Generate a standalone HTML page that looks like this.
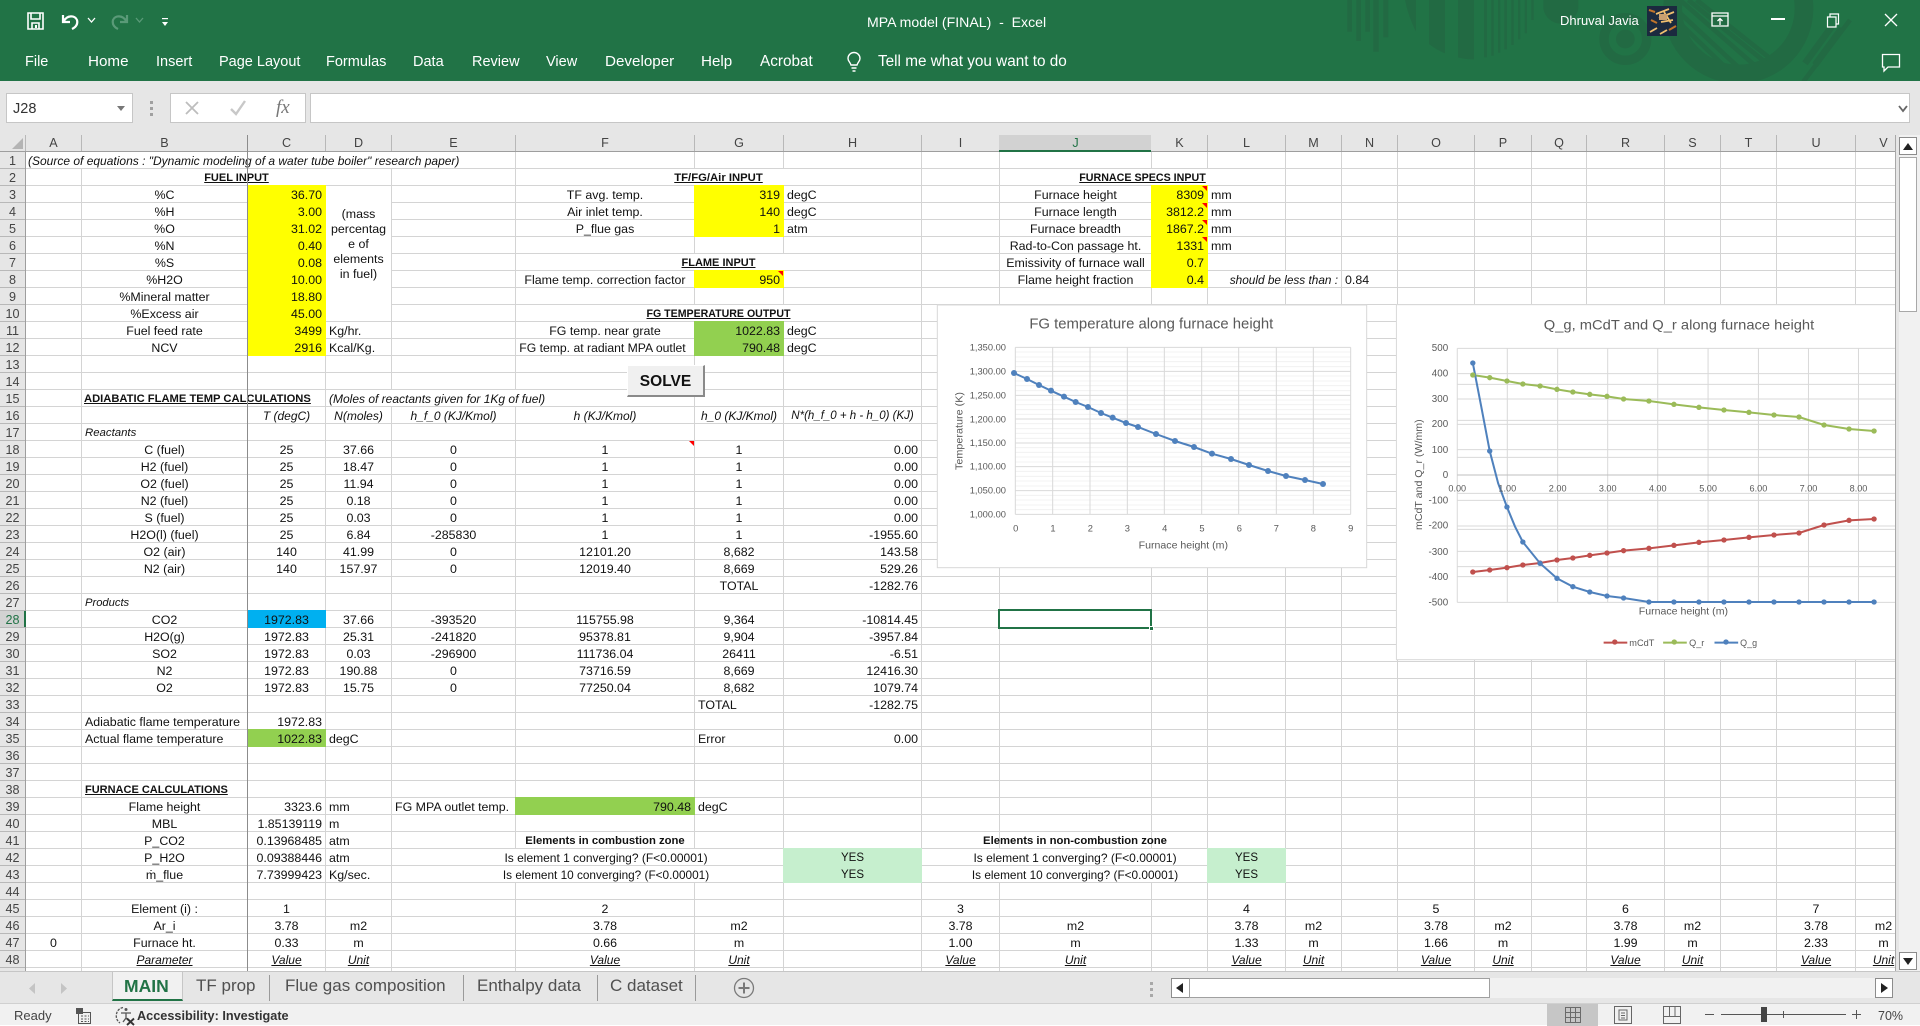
<!DOCTYPE html>
<html><head><meta charset="utf-8"><title>MPA model (FINAL) - Excel</title>
<style>
*{box-sizing:border-box}
html,body{margin:0;padding:0;width:1920px;height:1025px;overflow:hidden;background:#fff;font-family:"Liberation Sans",Arial,sans-serif}
#rb{position:absolute;left:0;top:0;width:1920px;height:81px;background:#217346;overflow:hidden}
#rb span{position:absolute;color:#fff;font-size:14.5px;line-height:18px;white-space:nowrap}
#fb{position:absolute;left:0;top:81px;width:1920px;height:54px;background:#e6e6e6}
.box{position:absolute;background:#fff;border:1px solid #c6c6c6;top:12px;height:30px}
#wrap{position:absolute;left:0;top:135px;width:1895px;height:836px;overflow:hidden}
#sheet{position:absolute;left:0;top:-135px;width:1895px;height:971px}
#grid{position:absolute;left:26px;top:152px;width:1870px;height:819px;background:repeating-linear-gradient(to bottom,transparent 0,transparent 16px,#d4d4d4 16px,#d4d4d4 17px)}
.v{position:absolute;top:152px;height:819px;width:1px;background:#d4d4d4}
#rh{position:absolute;left:0;top:152px;width:26px;height:819px;background:repeating-linear-gradient(to bottom,#e6e6e6 0,#e6e6e6 16px,#b8b8b8 16px,#b8b8b8 17px);border-right:1px solid #9e9e9e}
#ch{position:absolute;left:0;top:135px;width:1896px;height:17px;background:#e6e6e6;border-bottom:1px solid #9e9e9e}
.hs{position:absolute;top:135px;height:16px;width:1px;background:#b8b8b8}
.f{position:absolute}
.w{background:#fff;height:16px}
p{margin:1px 0 0;position:absolute;font-size:12.4px;line-height:16px;height:16px;padding:0 3px;white-space:nowrap;color:#111}
.h{top:135px;margin-top:0;text-align:center;color:#444;font-size:12.6px}
.n{left:0;width:25px;padding:0;text-align:center;color:#444;font-size:12.6px}
.A{left:26px;width:55px}.B{left:82px;width:165px}.C{left:248px;width:77px}.D{left:326px;width:65px}.E{left:392px;width:123px}.F{left:516px;width:178px}.G{left:695px;width:88px}.H{left:784px;width:137px}.I{left:922px;width:77px}.J{left:1000px;width:151px}.K{left:1152px;width:55px}.L{left:1208px;width:77px}.M{left:1286px;width:55px}.N{left:1342px;width:55px}.O{left:1398px;width:76px}.P{left:1475px;width:56px}.Q{left:1532px;width:54px}.R{left:1587px;width:77px}.S{left:1665px;width:55px}.T{left:1721px;width:55px}.U{left:1777px;width:78px}.V{left:1856px;width:55px}
.m{text-align:center}.e{text-align:right}
.it{font-style:italic;font-size:12px}.ul{text-decoration:underline}
.bh{font-weight:bold;text-decoration:underline;font-size:11px}
.r1{top:152px}.r2{top:169px}.r3{top:186px}.r4{top:203px}.r5{top:220px}.r6{top:237px}.r7{top:254px}.r8{top:271px}.r9{top:288px}.r10{top:305px}.r11{top:322px}.r12{top:339px}.r13{top:356px}.r14{top:373px}.r15{top:390px}.r16{top:407px}.r17{top:424px}.r18{top:441px}.r19{top:458px}.r20{top:475px}.r21{top:492px}.r22{top:509px}.r23{top:526px}.r24{top:543px}.r25{top:560px}.r26{top:577px}.r27{top:594px}.r28{top:611px}.r29{top:628px}.r30{top:645px}.r31{top:662px}.r32{top:679px}.r33{top:696px}.r34{top:713px}.r35{top:730px}.r36{top:747px}.r37{top:764px}.r38{top:781px}.r39{top:798px}.r40{top:815px}.r41{top:832px}.r42{top:849px}.r43{top:866px}.r44{top:883px}.r45{top:900px}.r46{top:917px}.r47{top:934px}.r48{top:951px}.r49{top:968px}
.tri{position:absolute;width:0;height:0;border-top:5px solid #f00;border-left:5px solid transparent}
#tabs{position:absolute;left:0;top:971px;width:1920px;height:32px;background:#e6e6e6;border-top:1px solid #c6c6c6}
#tabs span{position:absolute;top:4px;font-size:17px;line-height:20px;color:#505050;white-space:nowrap}
.sp{position:absolute;top:3px;height:26px;width:1px;background:#9a9a9a}
#st{position:absolute;left:0;top:1003px;width:1920px;height:22px;background:#f1f1f1;border-top:1px solid #d0d0d0}
#st span{position:absolute;top:3px;font-size:13px;line-height:18px;color:#444;white-space:nowrap}
svg{position:absolute;overflow:hidden}
svg text{font-family:"Liberation Sans",Arial,sans-serif;fill:#595959}
</style></head><body>

<div id="rb">
<svg style="left:1330px;top:0" width="590" height="81" viewBox="0 0 1770 243" fill="#226a43">
<rect x="52" y="0" width="14" height="95"/><rect x="79" y="0" width="14" height="123"/><rect x="106" y="0" width="14" height="95"/><rect x="130" y="0" width="16" height="155"/><rect x="160" y="0" width="15" height="112"/>
<path d="M225 0H258V95Q235 50 225 0Z"/><path d="M297 0H345V160Q320 150 297 132Z"/><path d="M384 0H432V178Q405 178 384 172Z"/>
<rect x="462" y="0" width="9" height="172"/><rect x="484" y="0" width="7" height="167"/><rect x="504" y="0" width="7" height="158"/><rect x="523" y="0" width="8" height="148"/><rect x="544" y="0" width="7" height="135"/><rect x="564" y="0" width="7" height="118"/><rect x="584" y="0" width="7" height="100"/><rect x="604" y="0" width="7" height="60"/>
<path d="M640 0H745V25A53 53 0 0 1 640 25Z"/>
<circle cx="886" cy="117" r="64" fill="none" stroke="#226a43" stroke-width="28"/><circle cx="886" cy="117" r="28"/>
<circle cx="1225" cy="25" r="197" fill="none" stroke="#226a43" stroke-width="56"/>
<g stroke="#226a43" stroke-width="14" fill="none"><path d="M1050 0L1290 210M1075 0L1310 190M1040 30L1250 225M1040 60L1210 225M1100 0L1320 175M1060 110L1180 225"/>
<path d="M1425 190L1505 80M1455 195L1535 85" stroke-width="20"/><path d="M1420 245L1560 60" stroke-width="14"/></g>
</svg>
<svg style="left:26px;top:11px" width="20" height="20" viewBox="0 0 20 20" fill="none" stroke="#fff" stroke-width="1.6"><path d="M2 2H17V18H2Z"/><path d="M5 2V8H14V2M6 18V12H13V18"/><rect x="9" y="14" width="2" height="3" fill="#fff" stroke="none"/></svg>
<svg style="left:60px;top:11px" width="22" height="20" viewBox="0 0 22 20" fill="none" stroke="#fff" stroke-width="2.2"><path d="M3 4V11H10M4 10C7 4 15 4 17 9C18 13 16 16 12 18"/></svg>
<svg style="left:87px;top:17px" width="9" height="7" viewBox="0 0 9 7" fill="none" stroke="#fff" stroke-width="1.3"><path d="M1 1L4.500 5L8 1"/></svg>
<svg style="left:108px;top:11px" width="22" height="20" viewBox="0 0 22 20" fill="none" stroke="#5a9a78" stroke-width="2.2"><path d="M19 4V11H12M18 10C15 4 7 4 5 9C4 13 6 16 10 18"/></svg>
<svg style="left:135px;top:17px" width="9" height="7" viewBox="0 0 9 7" fill="none" stroke="#5a9a78" stroke-width="1.3"><path d="M1 1L4.500 5L8 1"/></svg>
<svg style="left:161px;top:17px" width="8" height="10" viewBox="0 0 8 10" fill="#fff"><rect x="1" y="1" width="6" height="1.200"/><path d="M1 5H7L4 9Z"/></svg>
<span style="left:867px;top:13px;font-size:14.1px">MPA model (FINAL)&nbsp; -&nbsp; Excel</span>
<span style="left:25px;top:53px">File</span>
<span style="left:88px;top:53px;font-size:15.2px">Home</span>
<span style="left:156px;top:53px">Insert</span>
<span style="left:219px;top:53px">Page Layout</span>
<span style="left:326px;top:53px">Formulas</span>
<span style="left:413px;top:53px">Data</span>
<span style="left:472px;top:53px">Review</span>
<span style="left:546px;top:53px">View</span>
<span style="left:605px;top:53px;font-size:15.2px">Developer</span>
<span style="left:701px;top:53px;font-size:15.2px">Help</span>
<span style="left:760px;top:53px;font-size:15.3px">Acrobat</span>
<svg style="left:845px;top:51px" width="18" height="22" viewBox="0 0 18 22" fill="none" stroke="#fff" stroke-width="1.400"><path d="M6 14C5 11 3 10 3 7.500A6 6 0 0 1 15 7.500C15 10 13 11 12 14Z"/><path d="M6.500 17H11.500M7.500 20H10.500"/></svg>
<span style="left:878px;top:53px;font-size:15.3px">Tell me what you want to do</span>
<span style="left:1560px;top:12px;font-size:13px">Dhruval Javia</span>
<svg style="left:1647px;top:6px" width="30" height="30" viewBox="0 0 30 30"><rect width="30" height="30" fill="#1b2a3f"/><path d="M9 8L22 3M12 12L27 6M14 16L26 14M17 6L24 17M3 26L10 22M13 28L20 24" stroke="#f0c070" stroke-width="1.800" fill="none"/><path d="M2 4L8 6M4 14L10 17M22 24L29 20" stroke="#c2742a" stroke-width="2" fill="none"/><rect x="12" y="8" width="8" height="6" fill="#c9a070"/></svg>
<svg style="left:1711px;top:12px" width="18" height="15" viewBox="0 0 18 15" fill="none" stroke="#fff" stroke-width="1.300"><path d="M1 1H17V14H1ZM1 4H17M9 13V7M6.500 9L9 6.500L11.500 9"/></svg>
<div style="position:absolute;left:1771px;top:18px;width:14px;height:1.500px;background:#fff"></div>
<svg style="left:1826px;top:13px" width="14" height="15" viewBox="0 0 14 15" fill="none" stroke="#fff" stroke-width="1.200"><path d="M1.500 4H10V14H1.500ZM4 4V1H12.500V11H10"/></svg>
<svg style="left:1884px;top:13px" width="14" height="14" viewBox="0 0 14 14" stroke="#fff" stroke-width="1.300"><path d="M1 1L13 13M13 1L1 13"/></svg>
<svg style="left:1881px;top:53px" width="20" height="20" viewBox="0 0 20 20" fill="none" stroke="#fff" stroke-width="1.300"><path d="M1.500 1.500H18.500V14H7L3 18V14H1.500Z"/></svg>
</div>

<div id="fb">
<div class="box" style="left:6px;width:127px"></div>
<span style="position:absolute;left:13px;top:19px;font-size:14.5px;line-height:18px;color:#333">J28</span>
<svg style="left:116px;top:24px" width="10" height="7" viewBox="0 0 10 7" fill="#777"><path d="M1 1H9L5 6Z"/></svg>
<div style="position:absolute;left:150px;top:20px;width:3px;height:3px;background:#a0a0a0;box-shadow:0 6px #a0a0a0,0 12px #a0a0a0"></div>
<div class="box" style="left:170px;width:136px"></div>
<svg style="left:185px;top:20px" width="14" height="14" viewBox="0 0 14 14" stroke="#bdbdbd" stroke-width="1.800"><path d="M1 1L13 13M13 1L1 13"/></svg>
<svg style="left:229px;top:19px" width="18" height="16" viewBox="0 0 18 16" fill="none" stroke="#c8c8c8" stroke-width="2.400"><path d="M2 9L7 14L16 1"/></svg>
<span style="position:absolute;left:276px;top:16px;font:italic 19px 'Liberation Serif',serif;color:#777">fx</span>
<div class="box" style="left:310px;width:1600px"></div>
<svg style="left:1898px;top:24px" width="10" height="8" viewBox="0 0 10 8" fill="none" stroke="#666" stroke-width="1.800"><path d="M1 1L5 6L9 1"/></svg>
</div>

<div id="wrap"><div id="sheet">
<div id="grid"></div>
<div class="v" style="left:81px"></div><div class="v" style="left:325px"></div><div class="v" style="left:391px"></div><div class="v" style="left:515px"></div><div class="v" style="left:694px"></div><div class="v" style="left:783px"></div><div class="v" style="left:921px"></div><div class="v" style="left:999px"></div><div class="v" style="left:1151px"></div><div class="v" style="left:1207px"></div><div class="v" style="left:1285px"></div><div class="v" style="left:1341px"></div><div class="v" style="left:1397px"></div><div class="v" style="left:1474px"></div><div class="v" style="left:1531px"></div><div class="v" style="left:1586px"></div><div class="v" style="left:1664px"></div><div class="v" style="left:1720px"></div><div class="v" style="left:1776px"></div><div class="v" style="left:1855px"></div>

<!-- covers -->
<div class="f w" style="left:26px;top:152px;width:489px"></div>
<div class="f w" style="left:82px;top:169px;width:309px"></div>
<div class="f w" style="left:516px;top:169px;width:405px"></div>
<div class="f w" style="left:1000px;top:169px;width:285px"></div>
<div class="f w" style="left:516px;top:254px;width:405px"></div>
<div class="f w" style="left:516px;top:305px;width:405px"></div>
<div class="f" style="left:326px;top:186px;width:65px;height:135px;background:#fff"></div>
<div class="f w" style="left:1208px;top:271px;width:133px"></div>
<div class="f w" style="left:82px;top:390px;width:243px"></div>
<div class="f w" style="left:326px;top:390px;width:368px"></div>
<div class="f w" style="left:500px;top:849px;width:210px"></div>
<div class="f w" style="left:500px;top:866px;width:210px"></div>
<div class="f w" style="left:970px;top:849px;width:210px"></div>
<div class="f w" style="left:970px;top:866px;width:210px"></div>
<!-- fills -->
<div class="f" style="left:247px;top:185px;width:79px;height:171px;background:#ff0"></div>
<div class="f" style="left:694px;top:185px;width:90px;height:52px;background:#ff0"></div>
<div class="f" style="left:694px;top:270px;width:90px;height:18px;background:#ff0"></div>
<div class="f" style="left:694px;top:321px;width:90px;height:35px;background:#92d050"></div>
<div class="f" style="left:1151px;top:185px;width:57px;height:103px;background:#ff0"></div>
<div class="f" style="left:247px;top:610px;width:79px;height:18px;background:#00b0f0"></div>
<div class="f" style="left:247px;top:729px;width:79px;height:18px;background:#92d050"></div>
<div class="f" style="left:515px;top:797px;width:180px;height:18px;background:#92d050"></div>
<div class="f" style="left:783px;top:848px;width:139px;height:35px;background:#c6efce"></div>
<div class="f" style="left:1207px;top:848px;width:79px;height:35px;background:#c6efce"></div>

<!-- headers -->
<div id="ch"></div>
<svg style="left:12px;top:138px" width="11" height="11" viewBox="0 0 11 11" fill="#b4b4b4"><path d="M11 0V11H0Z"/></svg>
<div class="f" style="left:999px;top:135px;width:152px;height:17px;background:#d2d2d2;border-bottom:2px solid #217346"></div>
<div class="hs" style="left:25px"></div><div class="hs" style="left:81px"></div><div class="hs" style="left:325px"></div><div class="hs" style="left:391px"></div><div class="hs" style="left:515px"></div><div class="hs" style="left:694px"></div><div class="hs" style="left:783px"></div><div class="hs" style="left:921px"></div><div class="hs" style="left:1207px"></div><div class="hs" style="left:1285px"></div><div class="hs" style="left:1341px"></div><div class="hs" style="left:1397px"></div><div class="hs" style="left:1474px"></div><div class="hs" style="left:1531px"></div><div class="hs" style="left:1586px"></div><div class="hs" style="left:1664px"></div><div class="hs" style="left:1720px"></div><div class="hs" style="left:1776px"></div><div class="hs" style="left:1855px"></div>
<p class="h A">A</p><p class="h B">B</p><p class="h C">C</p><p class="h D">D</p><p class="h E">E</p><p class="h F">F</p><p class="h G">G</p><p class="h H">H</p><p class="h I">I</p><p class="h J" style="color:#217346">J</p><p class="h K">K</p><p class="h L">L</p><p class="h M">M</p><p class="h N">N</p><p class="h O">O</p><p class="h P">P</p><p class="h Q">Q</p><p class="h R">R</p><p class="h S">S</p><p class="h T">T</p><p class="h U">U</p><p class="h V">V</p>

<div id="rh"></div>
<div class="f" style="left:0;top:611px;width:26px;height:16px;background:#d2d2d2;border-right:2px solid #217346"></div>
<p class="n r1">1</p><p class="n r2">2</p><p class="n r3">3</p><p class="n r4">4</p><p class="n r5">5</p><p class="n r6">6</p><p class="n r7">7</p><p class="n r8">8</p><p class="n r9">9</p><p class="n r10">10</p><p class="n r11">11</p><p class="n r12">12</p><p class="n r13">13</p><p class="n r14">14</p><p class="n r15">15</p><p class="n r16">16</p><p class="n r17">17</p><p class="n r18">18</p><p class="n r19">19</p><p class="n r20">20</p><p class="n r21">21</p><p class="n r22">22</p><p class="n r23">23</p><p class="n r24">24</p><p class="n r25">25</p><p class="n r26">26</p><p class="n r27">27</p><p class="n r28" style="color:#217346">28</p><p class="n r29">29</p><p class="n r30">30</p><p class="n r31">31</p><p class="n r32">32</p><p class="n r33">33</p><p class="n r34">34</p><p class="n r35">35</p><p class="n r36">36</p><p class="n r37">37</p><p class="n r38">38</p><p class="n r39">39</p><p class="n r40">40</p><p class="n r41">41</p><p class="n r42">42</p><p class="n r43">43</p><p class="n r44">44</p><p class="n r45">45</p><p class="n r46">46</p><p class="n r47">47</p><p class="n r48">48</p>

<!-- cells -->
<p class="A r1 it" style="padding-left:2px;width:480px">(Source of equations : "Dynamic modeling of a water tube boiler" research paper)</p>
<p class="r2 m bh" style="left:82px;width:309px">FUEL INPUT</p>
<p class="r2 m bh" style="left:516px;width:405px;font-size:11.3px">TF/FG/Air INPUT</p>
<p class="r2 m bh" style="left:1000px;width:285px;font-size:10.7px">FURNACE SPECS INPUT</p>
<p class="B m r3">%C</p><p class="C e r3">36.70</p>
<p class="B m r4">%H</p><p class="C e r4">3.00</p>
<p class="B m r5">%O</p><p class="C e r5">31.02</p>
<p class="B m r6">%N</p><p class="C e r6">0.40</p>
<p class="B m r7">%S</p><p class="C e r7">0.08</p>
<p class="B m r8">%H2O</p><p class="C e r8">10.00</p>
<p class="B m r9">%Mineral matter</p><p class="C e r9">18.80</p>
<p class="B m r10">%Excess air</p><p class="C e r10">45.00</p>
<p class="B m r11">Fuel feed rate</p><p class="C e r11">3499</p><p class="D r11">Kg/hr.</p>
<p class="B m r12">NCV</p><p class="C e r12">2916</p><p class="D r12">Kcal/Kg.</p>
<p class="m" style="left:326px;top:206px;width:65px;height:76px;line-height:15px;padding:0">(mass<br>percentag<br>e of<br>elements<br>in fuel)</p>

<p class="F m r3">TF avg. temp.</p><p class="G e r3">319</p><p class="H r3">degC</p>
<p class="F m r4">Air inlet temp.</p><p class="G e r4">140</p><p class="H r4">degC</p>
<p class="F m r5">P_flue gas</p><p class="G e r5">1</p><p class="H r5">atm</p>
<p class="r7 m bh" style="left:516px;width:405px">FLAME INPUT</p>
<p class="F m r8">Flame temp. correction factor</p><p class="G e r8">950</p>
<p class="r10 m bh" style="left:516px;width:405px;font-size:10.6px">FG TEMPERATURE OUTPUT</p>
<p class="F m r11">FG temp. near grate</p><p class="G e r11">1022.83</p><p class="H r11">degC</p>
<p class="F m r12" style="padding:0;width:173px;font-size:12.2px">FG temp. at radiant MPA outlet</p><p class="G e r12">790.48</p><p class="H r12">degC</p>

<p class="J m r3">Furnace height</p><p class="K e r3">8309</p><p class="L r3">mm</p>
<p class="J m r4">Furnace length</p><p class="K e r4">3812.2</p><p class="L r4">mm</p>
<p class="J m r5">Furnace breadth</p><p class="K e r5">1867.2</p><p class="L r5">mm</p>
<p class="J m r6">Rad-to-Con passage ht.</p><p class="K e r6">1331</p><p class="L r6">mm</p>
<p class="J m r7" style="padding:0">Emissivity of furnace wall</p><p class="K e r7">0.7</p>
<p class="J m r8">Flame height fraction</p><p class="K e r8">0.4</p>
<p class="r8 e it" style="left:1208px;width:133px;font-size:11.8px">should be less than :</p><p class="N r8">0.84</p>

<div class="tri" style="left:778px;top:271px"></div>
<div class="tri" style="left:1202px;top:186px"></div><div class="tri" style="left:1202px;top:203px"></div><div class="tri" style="left:1202px;top:220px"></div><div class="tri" style="left:1202px;top:237px"></div>
<div class="tri" style="left:689px;top:441px"></div>

<p class="B r15 bh" style="width:240px;left:81px;font-size:11.2px">ADIABATIC FLAME TEMP CALCULATIONS</p>
<p class="D r15 it" style="width:300px">(Moles of reactants given for 1Kg of fuel)</p>
<p class="C m r16 it">T (degC)</p><p class="D m r16 it">N(moles)</p><p class="E m r16 it">h_f_0 (KJ/Kmol)</p><p class="F m r16 it">h (KJ/Kmol)</p><p class="G m r16 it">h_0 (KJ/Kmol)</p><p class="H m r16 it" style="padding:0;font-size:11.5px">N*(h_f_0 + h - h_0) (KJ)</p>
<p class="B r17 it" style="font-size:11.4px">Reactants</p>

<p class="B m r18">C (fuel)</p><p class="C m r18">25</p><p class="D m r18">37.66</p><p class="E m r18">0</p><p class="F m r18">1</p><p class="G m r18">1</p><p class="H e r18">0.00</p>
<p class="B m r19">H2 (fuel)</p><p class="C m r19">25</p><p class="D m r19">18.47</p><p class="E m r19">0</p><p class="F m r19">1</p><p class="G m r19">1</p><p class="H e r19">0.00</p>
<p class="B m r20">O2 (fuel)</p><p class="C m r20">25</p><p class="D m r20">11.94</p><p class="E m r20">0</p><p class="F m r20">1</p><p class="G m r20">1</p><p class="H e r20">0.00</p>
<p class="B m r21">N2 (fuel)</p><p class="C m r21">25</p><p class="D m r21">0.18</p><p class="E m r21">0</p><p class="F m r21">1</p><p class="G m r21">1</p><p class="H e r21">0.00</p>
<p class="B m r22">S (fuel)</p><p class="C m r22">25</p><p class="D m r22">0.03</p><p class="E m r22">0</p><p class="F m r22">1</p><p class="G m r22">1</p><p class="H e r22">0.00</p>
<p class="B m r23">H2O(l) (fuel)</p><p class="C m r23">25</p><p class="D m r23">6.84</p><p class="E m r23">-285830</p><p class="F m r23">1</p><p class="G m r23">1</p><p class="H e r23">-1955.60</p>
<p class="B m r24">O2 (air)</p><p class="C m r24">140</p><p class="D m r24">41.99</p><p class="E m r24">0</p><p class="F m r24">12101.20</p><p class="G m r24">8,682</p><p class="H e r24">143.58</p>
<p class="B m r25">N2 (air)</p><p class="C m r25">140</p><p class="D m r25">157.97</p><p class="E m r25">0</p><p class="F m r25">12019.40</p><p class="G m r25">8,669</p><p class="H e r25">529.26</p>
<p class="G m r26">TOTAL</p><p class="H e r26">-1282.76</p>
<p class="B r27 it" style="font-size:11.2px">Products</p>
<p class="B m r28">CO2</p><p class="C m r28">1972.83</p><p class="D m r28">37.66</p><p class="E m r28">-393520</p><p class="F m r28">115755.98</p><p class="G m r28">9,364</p><p class="H e r28">-10814.45</p>
<p class="B m r29">H2O(g)</p><p class="C m r29">1972.83</p><p class="D m r29">25.31</p><p class="E m r29">-241820</p><p class="F m r29">95378.81</p><p class="G m r29">9,904</p><p class="H e r29">-3957.84</p>
<p class="B m r30">SO2</p><p class="C m r30">1972.83</p><p class="D m r30">0.03</p><p class="E m r30">-296900</p><p class="F m r30">111736.04</p><p class="G m r30">26411</p><p class="H e r30">-6.51</p>
<p class="B m r31">N2</p><p class="C m r31">1972.83</p><p class="D m r31">190.88</p><p class="E m r31">0</p><p class="F m r31">73716.59</p><p class="G m r31">8,669</p><p class="H e r31">12416.30</p>
<p class="B m r32">O2</p><p class="C m r32">1972.83</p><p class="D m r32">15.75</p><p class="E m r32">0</p><p class="F m r32">77250.04</p><p class="G m r32">8,682</p><p class="H e r32">1079.74</p>
<p class="G r33">TOTAL</p><p class="H e r33">-1282.75</p>
<p class="B r34">Adiabatic flame temperature</p><p class="C e r34">1972.83</p>
<p class="B r35">Actual flame temperature</p><p class="C e r35">1022.83</p><p class="D r35">degC</p><p class="G r35">Error</p><p class="H e r35">0.00</p>
<p class="B r38 bh">FURNACE CALCULATIONS</p>
<p class="B m r39">Flame height</p><p class="C e r39">3323.6</p><p class="D r39">mm</p><p class="E r39">FG MPA outlet temp.</p><p class="F e r39">790.48</p><p class="G r39">degC</p>
<p class="B m r40">MBL</p><p class="C e r40">1.85139119</p><p class="D r40">m</p>
<p class="B m r41">P_CO2</p><p class="C e r41">0.13968485</p><p class="D r41">atm</p>
<p class="B m r42">P_H2O</p><p class="C e r42">0.09388446</p><p class="D r42">atm</p>
<p class="B m r43">ṁ_flue</p><p class="C e r43">7.73999423</p><p class="D r43">Kg/sec.</p>
<p class="F m r41" style="font-weight:bold;font-size:11.3px">Elements in combustion zone</p>
<p class="m r42" style="left:456px;width:300px;font-size:12px">Is element 1 converging? (F&lt;0.00001)</p>
<p class="m r43" style="left:456px;width:300px;font-size:11.8px">Is element 10 converging? (F&lt;0.00001)</p>
<p class="H m r42" style="font-size:11.5px">YES</p><p class="H m r43" style="font-size:11.5px">YES</p>
<p class="m r41" style="left:925px;width:300px;font-weight:bold;font-size:11.3px">Elements in non-combustion zone</p>
<p class="m r42" style="left:925px;width:300px;font-size:12px">Is element 1 converging? (F&lt;0.00001)</p>
<p class="m r43" style="left:925px;width:300px;font-size:11.8px">Is element 10 converging? (F&lt;0.00001)</p>
<p class="L m r42" style="font-size:11.5px">YES</p><p class="L m r43" style="font-size:11.5px">YES</p>

<p class="B m r45">Element (i) :</p><p class="B m r46">Ar_i</p><p class="A m r47">0</p><p class="B m r47">Furnace ht.</p><p class="B m r48 it ul">Parameter</p>
<p class="C m r45">1</p><p class="C m r46">3.78</p><p class="D m r46">m2</p><p class="C m r47">0.33</p><p class="D m r47">m</p><p class="C m r48 it ul">Value</p><p class="D m r48 it ul">Unit</p>
<p class="F m r45">2</p><p class="F m r46">3.78</p><p class="G m r46">m2</p><p class="F m r47">0.66</p><p class="G m r47">m</p><p class="F m r48 it ul">Value</p><p class="G m r48 it ul">Unit</p>
<p class="I m r45">3</p><p class="I m r46">3.78</p><p class="J m r46">m2</p><p class="I m r47">1.00</p><p class="J m r47">m</p><p class="I m r48 it ul">Value</p><p class="J m r48 it ul">Unit</p>
<p class="L m r45">4</p><p class="L m r46">3.78</p><p class="M m r46">m2</p><p class="L m r47">1.33</p><p class="M m r47">m</p><p class="L m r48 it ul">Value</p><p class="M m r48 it ul">Unit</p>
<p class="O m r45">5</p><p class="O m r46">3.78</p><p class="P m r46">m2</p><p class="O m r47">1.66</p><p class="P m r47">m</p><p class="O m r48 it ul">Value</p><p class="P m r48 it ul">Unit</p>
<p class="R m r45">6</p><p class="R m r46">3.78</p><p class="S m r46">m2</p><p class="R m r47">1.99</p><p class="S m r47">m</p><p class="R m r48 it ul">Value</p><p class="S m r48 it ul">Unit</p>
<p class="U m r45">7</p><p class="U m r46">3.78</p><p class="V m r46">m2</p><p class="U m r47">2.33</p><p class="V m r47">m</p><p class="U m r48 it ul">Value</p><p class="V m r48 it ul">Unit</p>

<!-- selection -->
<div class="f" style="left:998px;top:609px;width:154px;height:20px;border:2px solid #217346"></div>
<div class="f" style="left:1149px;top:626px;width:5px;height:5px;background:#217346;border:1px solid #fff"></div>
<!-- freeze line -->
<div class="f" style="left:247px;top:135px;width:1px;height:836px;background:#8c8c8c"></div>

<!-- SOLVE button -->
<div class="f" style="left:627px;top:365px;width:78px;height:32px;background:#f0f0f0;border-right:2px solid #8a8a8a;border-bottom:2px solid #8a8a8a;border-top:1px solid #fff;border-left:1px solid #fff;text-align:center;font-weight:bold;font-size:15.5px;line-height:31px;color:#111">SOLVE</div>

<!-- Chart 1 -->
<svg style="left:930px;top:130px" width="480" height="450" viewBox="0 0 1440 1350">
<rect x="22" y="525" width="1288" height="788" fill="#fff" stroke="#d9d9d9" stroke-width="3"/>
<text x="298" y="596" font-size="43" textLength="732" lengthAdjust="spacingAndGlyphs">FG temperature along furnace height</text>
<path d="M256 666H1262M256 681H1262M256 695H1262M256 710H1262M256 738H1262M256 753H1262M256 767H1262M256 782H1262M256 810H1262M256 824H1262M256 839H1262M256 853H1262M256 881H1262M256 896H1262M256 910H1262M256 925H1262M256 953H1262M256 967H1262M256 981H1262M256 996H1262M256 1024H1262M256 1039H1262M256 1053H1262M256 1068H1262M256 1096H1262M256 1110H1262M256 1125H1262M256 1139H1262" stroke="#efefef" stroke-width="2.500" fill="none"/>
<path d="M256 652H1262M256 724H1262M256 796H1262M256 867H1262M256 939H1262M256 1010H1262M256 1082H1262M256 1153H1262M256 652V1153M368 652V1153M480 652V1153M592 652V1153M703 652V1153M815 652V1153M926 652V1153M1039 652V1153M1150 652V1153M1262 652V1153" stroke="#d9d9d9" stroke-width="3" fill="none"/>
<polyline points="252,729 291,747 327,765 363,782 402,800 437,816 474,831 513,849 548,863 588,879 624,891 678,912 735,933 792,951 846,971 903,987 957,1005 1014,1023 1068,1038 1125,1050 1179,1062" fill="none" stroke="#4f81bd" stroke-width="6"/>
<g fill="#4f81bd"><circle cx="252" cy="729" r="9"/><circle cx="291" cy="747" r="9"/><circle cx="327" cy="765" r="9"/><circle cx="363" cy="782" r="9"/><circle cx="402" cy="800" r="9"/><circle cx="437" cy="816" r="9"/><circle cx="474" cy="831" r="9"/><circle cx="513" cy="849" r="9"/><circle cx="548" cy="863" r="9"/><circle cx="588" cy="879" r="9"/><circle cx="624" cy="891" r="9"/><circle cx="678" cy="912" r="9"/><circle cx="735" cy="933" r="9"/><circle cx="792" cy="951" r="9"/><circle cx="846" cy="971" r="9"/><circle cx="903" cy="987" r="9"/><circle cx="957" cy="1005" r="9"/><circle cx="1014" cy="1023" r="9"/><circle cx="1068" cy="1038" r="9"/><circle cx="1125" cy="1050" r="9"/><circle cx="1179" cy="1062" r="9"/></g>
<g font-size="28" text-anchor="end"><text x="228" y="662">1,350.00</text><text x="228" y="734">1,300.00</text><text x="228" y="806">1,250.00</text><text x="228" y="878">1,200.00</text><text x="228" y="948">1,150.00</text><text x="228" y="1019">1,100.00</text><text x="228" y="1091">1,050.00</text><text x="228" y="1163">1,000.00</text></g>
<g font-size="28" text-anchor="middle"><text x="257" y="1205">0</text><text x="369" y="1205">1</text><text x="481" y="1205">2</text><text x="592" y="1205">3</text><text x="704" y="1205">4</text><text x="816" y="1205">5</text><text x="928" y="1205">6</text><text x="1039" y="1205">7</text><text x="1150" y="1205">8</text><text x="1262" y="1205">9</text></g>
<text x="626" y="1256" font-size="31" textLength="268" lengthAdjust="spacingAndGlyphs">Furnace height (m)</text>
<text transform="translate(97,1020) rotate(-90)" font-size="31" textLength="234" lengthAdjust="spacingAndGlyphs">Temperature (K)</text>
</svg>

<!-- Chart 2 -->
<svg style="left:1390px;top:300px" width="505" height="362" viewBox="0 0 1494 1086" preserveAspectRatio="none">
<rect x="19" y="14" width="1600" height="1065" fill="#fff" stroke="#d9d9d9" stroke-width="3"/>
<text x="455" y="89" font-size="41" textLength="800" lengthAdjust="spacingAndGlyphs">Q_g, mCdT and Q_r along furnace height</text>
<path d="M199 145H1494M199 221H1494M199 253H1494M199 297H1494M199 361H1494M199 373H1494M199 449H1494M199 472H1494M199 580H1494M199 601H1494M199 678H1494M199 688H1494M199 754H1494M199 800H1494M199 830H1494M199 907H1494M199 145V907M347 145V907M496 145V907M644 145V907M792 145V907M941 145V907M1090 145V907M1238 145V907M1386 145V907" stroke="#d9d9d9" stroke-width="3" fill="none"/>
<path d="M199 525H1494" stroke="#bfbfbf" stroke-width="3"/>
<g fill="none" stroke-width="6">
<polyline stroke="#9bbb59" points="245,225 295,233 346,243 393,252 444,258 494,268 541,276 591,283 642,289 691,297 766,303 840,313 914,322 988,330 1062,337 1136,345 1210,351 1284,375 1358,387 1432,393"/>
<polyline stroke="#c0504d" points="245,816 295,810 346,803 393,795 444,789 494,780 541,774 591,766 642,759 691,752 766,745 840,736 914,727 988,720 1062,712 1136,705 1210,699 1284,675 1358,661 1432,657"/>
<polyline stroke="#4f81bd" points="245,189 270,320 295,453 320,550 346,621 370,680 393,726 444,790 494,835 541,860 591,876 642,888 691,894 766,906 840,906 914,906 988,906 1062,906 1136,906 1210,906 1284,906 1358,906 1432,906"/>
</g>
<g fill="#9bbb59"><circle cx="245" cy="225" r="8"/><circle cx="295" cy="233" r="8"/><circle cx="346" cy="243" r="8"/><circle cx="393" cy="252" r="8"/><circle cx="444" cy="258" r="8"/><circle cx="494" cy="268" r="8"/><circle cx="541" cy="276" r="8"/><circle cx="591" cy="283" r="8"/><circle cx="642" cy="289" r="8"/><circle cx="691" cy="297" r="8"/><circle cx="766" cy="303" r="8"/><circle cx="840" cy="313" r="8"/><circle cx="914" cy="322" r="8"/><circle cx="988" cy="330" r="8"/><circle cx="1062" cy="337" r="8"/><circle cx="1136" cy="345" r="8"/><circle cx="1210" cy="351" r="8"/><circle cx="1284" cy="375" r="8"/><circle cx="1358" cy="387" r="8"/><circle cx="1432" cy="393" r="8"/></g>
<g fill="#c0504d"><circle cx="245" cy="816" r="8"/><circle cx="295" cy="810" r="8"/><circle cx="346" cy="803" r="8"/><circle cx="393" cy="795" r="8"/><circle cx="444" cy="789" r="8"/><circle cx="494" cy="780" r="8"/><circle cx="541" cy="774" r="8"/><circle cx="591" cy="766" r="8"/><circle cx="642" cy="759" r="8"/><circle cx="691" cy="752" r="8"/><circle cx="766" cy="745" r="8"/><circle cx="840" cy="736" r="8"/><circle cx="914" cy="727" r="8"/><circle cx="988" cy="720" r="8"/><circle cx="1062" cy="712" r="8"/><circle cx="1136" cy="705" r="8"/><circle cx="1210" cy="699" r="8"/><circle cx="1284" cy="675" r="8"/><circle cx="1358" cy="661" r="8"/><circle cx="1432" cy="657" r="8"/></g>
<g fill="#4f81bd"><circle cx="245" cy="189" r="8"/><circle cx="295" cy="453" r="8"/><circle cx="346" cy="621" r="8"/><circle cx="393" cy="726" r="8"/><circle cx="444" cy="790" r="8"/><circle cx="494" cy="835" r="8"/><circle cx="541" cy="860" r="8"/><circle cx="591" cy="876" r="8"/><circle cx="642" cy="888" r="8"/><circle cx="691" cy="894" r="8"/><circle cx="766" cy="906" r="8"/><circle cx="840" cy="906" r="8"/><circle cx="914" cy="906" r="8"/><circle cx="988" cy="906" r="8"/><circle cx="1062" cy="906" r="8"/><circle cx="1136" cy="906" r="8"/><circle cx="1210" cy="906" r="8"/><circle cx="1284" cy="906" r="8"/><circle cx="1358" cy="906" r="8"/><circle cx="1432" cy="906" r="8"/></g>
<g font-size="29" text-anchor="end"><text x="172" y="153">500</text><text x="172" y="230">400</text><text x="172" y="306">300</text><text x="172" y="381">200</text><text x="172" y="459">100</text><text x="172" y="534">0</text><text x="172" y="611">-100</text><text x="172" y="686">-200</text><text x="172" y="765">-300</text><text x="172" y="840">-400</text><text x="172" y="917">-500</text></g>
<g font-size="27" text-anchor="middle"><text x="199" y="575">0.00</text><text x="347" y="575">1.00</text><text x="496" y="575">2.00</text><text x="644" y="575">3.00</text><text x="792" y="575">4.00</text><text x="941" y="575">5.00</text><text x="1090" y="575">6.00</text><text x="1238" y="575">7.00</text><text x="1386" y="575">8.00</text></g>
<text x="736" y="944" font-size="31" textLength="264" lengthAdjust="spacingAndGlyphs">Furnace height (m)</text>
<text transform="translate(95,690) rotate(-90)" font-size="31" textLength="332" lengthAdjust="spacingAndGlyphs">mCdT and Q_r (W/mm)</text>
<path d="M632 1028H702" stroke="#c0504d" stroke-width="6"/><circle cx="665" cy="1026" r="8" fill="#c0504d"/>
<path d="M808 1028H878" stroke="#9bbb59" stroke-width="6"/><circle cx="841" cy="1026" r="8" fill="#9bbb59"/>
<path d="M960 1028H1030" stroke="#4f81bd" stroke-width="6"/><circle cx="994" cy="1026" r="8" fill="#4f81bd"/>
<text x="708" y="1038" font-size="28" textLength="74" lengthAdjust="spacingAndGlyphs">mCdT</text>
<text x="885" y="1038" font-size="28" textLength="45" lengthAdjust="spacingAndGlyphs">Q_r</text>
<text x="1036" y="1038" font-size="28" textLength="50" lengthAdjust="spacingAndGlyphs">Q_g</text>
</svg>
</div></div>

<!-- vertical scrollbar -->
<div class="f" style="left:1895px;top:135px;width:25px;height:836px;background:#f1f1f1;border-left:1px solid #a8a8a8"></div>
<div class="f" style="left:1896px;top:135px;width:3px;height:836px;background:#e6e6e6"></div>
<div class="f" style="left:1899px;top:137px;width:18px;height:18px;background:#fff;border:1px solid #8c8c8c"></div>
<svg style="left:1903px;top:143px" width="10" height="7" viewBox="0 0 10 7" fill="#222"><path d="M5 0L10 7H0Z"/></svg>
<div class="f" style="left:1899px;top:157px;width:18px;height:155px;background:#fff;border:1px solid #a8a8a8"></div>
<div class="f" style="left:1899px;top:952px;width:18px;height:18px;background:#fff;border:1px solid #8c8c8c"></div>
<svg style="left:1903px;top:958px" width="10" height="7" viewBox="0 0 10 7" fill="#222"><path d="M0 0H10L5 7Z"/></svg>

<!-- Tabs -->
<div id="tabs">
<svg style="left:28px;top:10px" width="44" height="13" viewBox="0 0 44 13" fill="#c4c4c4"><path d="M7 1V12L1 6.500Z"/><path d="M33 1V12L39 6.500Z"/></svg>
<div class="f" style="left:112px;top:0;width:71px;height:29px;background:#f1f1f1;border-bottom:2px solid #217346;border-left:1px solid #c6c6c6;border-right:1px solid #c6c6c6"></div>
<span style="left:124px;font-weight:bold;color:#217346;font-size:17.5px">MAIN</span>
<span style="left:196px">TF prop</span><div class="sp" style="left:269px"></div>
<span style="left:285px">Flue gas composition</span><div class="sp" style="left:463px"></div>
<span style="left:477px">Enthalpy data</span><div class="sp" style="left:597px"></div>
<span style="left:610px">C dataset</span><div class="sp" style="left:695px"></div>
<svg style="left:733px;top:5px" width="22" height="22" viewBox="0 0 22 22" fill="none" stroke="#7a7a7a" stroke-width="1.300"><circle cx="11" cy="11" r="9.500"/><path d="M11 5.500V16.500M5.500 11H16.500" stroke-width="2"/></svg>
<div class="f" style="left:1150px;top:10px;width:3px;height:3px;background:#a8a8a8;box-shadow:0 6px #a8a8a8,0 12px #a8a8a8"></div>
<div class="f" style="left:1171px;top:6px;width:722px;height:20px;background:#f1f1f1"></div>
<div class="f" style="left:1171px;top:6px;width:19px;height:20px;background:#fff;border:1px solid #8c8c8c"></div>
<svg style="left:1176px;top:11px" width="7" height="10" viewBox="0 0 7 10" fill="#222"><path d="M7 0V10L0 5Z"/></svg>
<div class="f" style="left:1189px;top:6px;width:301px;height:20px;background:#fff;border:1px solid #a0a0a0"></div>
<div class="f" style="left:1875px;top:6px;width:18px;height:20px;background:#fff;border:1px solid #8c8c8c"></div>
<svg style="left:1881px;top:11px" width="7" height="10" viewBox="0 0 7 10" fill="#222"><path d="M0 0V10L7 5Z"/></svg>
</div>

<!-- Status -->
<div id="st">
<span style="left:14px">Ready</span>
<svg style="left:75px;top:3px" width="17" height="17" viewBox="0 0 17 17" fill="none" stroke="#555"><rect x="3.500" y="5.500" width="12" height="11"/><rect x="1" y="1" width="7" height="6" fill="#555" stroke="none"/><path d="M6 9H8M9.500 9H11.500M13 9H14M6 12H8M9.500 12H11.500M13 12H14M6 14.500H8M9.500 14.500H11.500M13 14.500H14"/></svg>
<svg style="left:114px;top:2px" width="22" height="20" viewBox="0 0 22 20" fill="none" stroke="#555" stroke-width="1.300"><path d="M9 1.500C4 2.500 1.500 7 2.500 12C3 14 4 15.500 6 17" stroke-dasharray="2.500 1.200"/><circle cx="12" cy="3.500" r="1.500" fill="#555" stroke="none"/><path d="M7 7H17M12 7V12L9 16M12 12L15 15"/><path d="M13 12.500L20 19M20 12.500L13 19" stroke="#333" stroke-width="1.900"/></svg>
<span style="left:137px;font-weight:bold;color:#333;font-size:12.7px">Accessibility: Investigate</span>
<div class="f" style="left:1547px;top:0;width:51px;height:22px;background:#c6c6c6"></div>
<svg style="left:1565px;top:3px" width="16" height="16" viewBox="0 0 16 16" fill="none" stroke="#6a6a6a"><path d="M.5.500H15.500V15.500H.5ZM5.500.500V15.500M10.500.500V15.500M.5 5.500H15.500M.5 10.500H15.500"/></svg>
<svg style="left:1614px;top:2px" width="18" height="18" viewBox="0 0 18 18" fill="none" stroke="#666"><path d="M.5.500H17.500V17.500H.5ZM5 4H13V14H5ZM7 7H11M7 9.500H11M7 12H11"/></svg>
<svg style="left:1663px;top:2px" width="18" height="18" viewBox="0 0 18 18" fill="none" stroke="#666"><path d="M.5.500H17.500V17.500H.5ZM6.500.500V10.500H.5M6.500 10.500H17.500M12 .500V10"/></svg>
<div class="f" style="left:1705px;top:10px;width:9px;height:1px;background:#555"></div>
<div class="f" style="left:1721px;top:10px;width:125px;height:1px;background:#555"></div>
<div class="f" style="left:1783px;top:7px;width:1px;height:7px;background:#555"></div>
<div class="f" style="left:1761px;top:3px;width:6px;height:15px;background:#444"></div>
<div class="f" style="left:1852px;top:10px;width:9px;height:1px;background:#555"></div>
<div class="f" style="left:1856px;top:6px;width:1px;height:9px;background:#555"></div>
<span style="left:1878px;font-size:12.5px">70%</span>
</div>
</body></html>
